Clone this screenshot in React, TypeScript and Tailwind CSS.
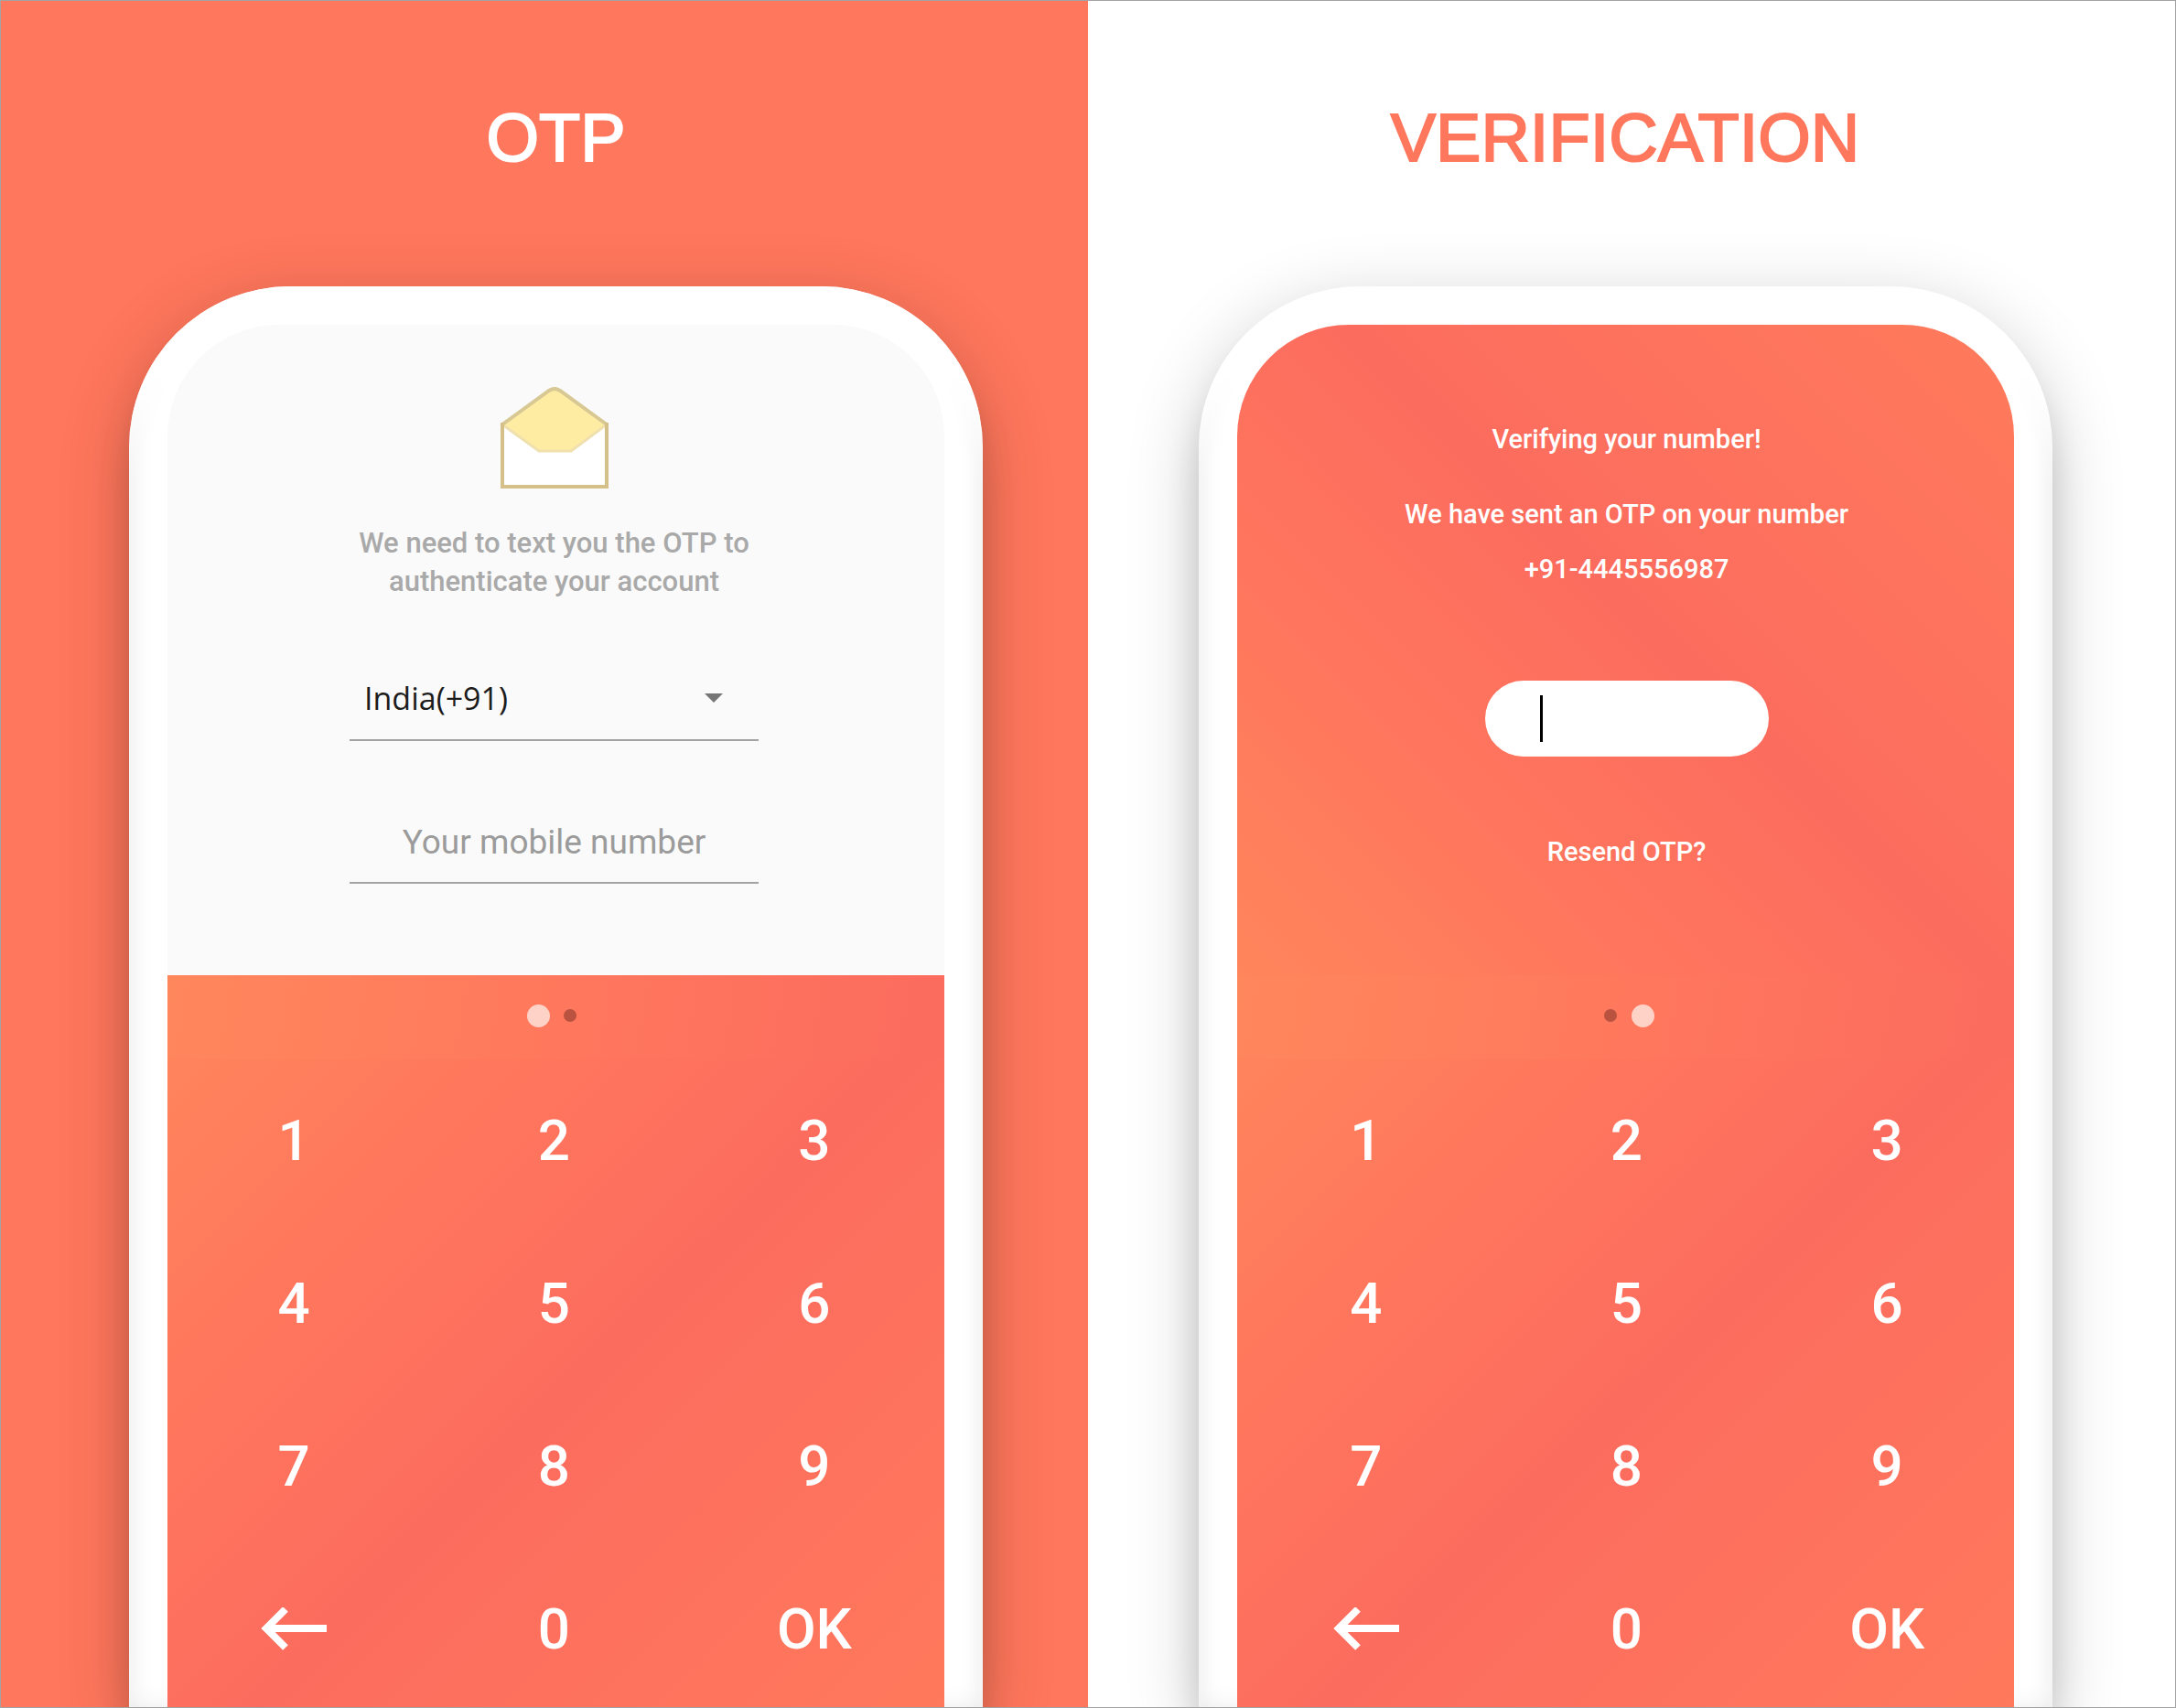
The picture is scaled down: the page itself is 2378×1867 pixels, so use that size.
import type { ReactNode } from "react";

const keys = ["1", "2", "3", "4", "5", "6", "7", "8", "9", "back", "0", "OK"];

function Envelope() {
  return (
    <svg viewBox="0 0 120 112" className="h-[112px] w-[120px]" aria-hidden="true">
      <path d="M3 41 L54 4 Q60 0 66 4 L117 41 V110 H3 Z" fill="#ffffff" />
      <path d="M3 41 L54 4 Q60 0 66 4 L117 41 L78 70 H43 Z" fill="#ffeca3" stroke="#f0e0ae" strokeWidth="3" strokeLinejoin="round" />
      <path d="M3 41 L54 4 Q60 0 66 4 L117 41" fill="none" stroke="#d8c894" strokeWidth="4" />
      <path d="M3 39 V109 H117 V39" fill="none" stroke="#d5c08a" strokeWidth="4" />
    </svg>
  );
}

function BackArrow() {
  return (
    <svg viewBox="0 0 72 48" className="h-[48px] w-[72px]" fill="none" stroke="#ffffff" strokeWidth="8" aria-hidden="true">
      <path d="M72 23H8" />
      <path d="M27 2 L6 23 L27 44" />
    </svg>
  );
}

function Dot({ active }: { active: boolean }) {
  return (
    <span className="flex w-[35px] justify-center">
      <span className={active ? "size-[25px] rounded-full bg-[#ffd2c8]" : "size-[14px] rounded-full bg-[#b9533f]"} />
    </span>
  );
}

function Keypad({ page, inset }: { page: number; inset: string }) {
  return (
    <div className="bg-[linear-gradient(135deg,#ff875c_0%,#ff775d_28%,#fc6c5e_54%,#ff795c_100%)]">
      <div className={`flex h-[92px] items-center justify-center bg-[linear-gradient(100deg,#ff875c_0%,#ff785d_50%,#fb6b5e_100%)] pb-1 ${inset}`}>
        <Dot active={page === 0} />
        <Dot active={page === 1} />
      </div>
      <div className={inset}>
        <div className="-mx-1 grid grid-cols-3">
          {keys.map((key) => (
            <button
              key={key}
              type="button"
              aria-label={key === "back" ? "Back" : undefined}
              className="flex h-[178px] items-center justify-center text-[62px] leading-none font-medium text-white"
            >
              {key === "back" ? <BackArrow /> : key}
            </button>
          ))}
        </div>
      </div>
    </div>
  );
}

function Phone({ children }: { children: ReactNode }) {
  return (
    <div className="mt-[122px] w-full max-w-[933px] rounded-t-[176px] bg-white px-[42px] pt-[42px] shadow-[0_20px_80px_rgba(0,0,0,0.2),0_40px_36px_rgba(0,0,0,0.14),inset_0_60px_24px_-12px_#ffffff,inset_0_0_28px_rgba(0,0,0,0.1)]">
      <div className="overflow-hidden rounded-t-[122px]">{children}</div>
    </div>
  );
}

const title = "text-[74px] leading-[80px] font-['Liberation_Sans',Arial,sans-serif] [-webkit-text-stroke:2px_currentColor]";

export default function App() {
  return (
    <main className="grid h-screen grid-cols-2 overflow-hidden border border-[#a3a3a3] bg-white font-[Roboto,sans-serif]">
      <section className="flex flex-col items-center overflow-hidden bg-[#ff775c] pt-[110px] pl-[25px]">
        <h1 className={`${title} text-white`}>OTP</h1>
        <Phone>
          <form className="flex flex-col items-center bg-[#fafafa] pt-[68px] pr-1 pb-[100px]">
            <Envelope />
            <p className="mt-[38px] w-[447px] text-center text-[31px] leading-[42px] font-medium text-[#a9a9a9]">
              We need to text you the OTP to authenticate your account
            </p>
            <div className="relative mt-[57px] w-[447px]">
              <select
                aria-label="Country code"
                className="h-[96px] w-full appearance-none border-b-2 border-[#a3a3a3] bg-transparent pt-1 pl-4 font-['Open_Sans',sans-serif] text-[34px] text-[#1c1c1c] outline-none"
              >
                <option>India(+91)</option>
              </select>
              <svg viewBox="0 0 20 10" className="pointer-events-none absolute top-[44px] right-[39px] h-[10px] w-[20px]" aria-hidden="true">
                <path d="M0 0H20L10 10Z" fill="#757575" />
              </svg>
            </div>
            <input
              type="tel"
              aria-label="Your mobile number"
              placeholder="Your mobile number"
              className="mt-[66px] h-[90px] w-[447px] border-b-2 border-[#a3a3a3] bg-transparent text-center text-[37px] text-[#1c1c1c] outline-none placeholder:text-[#9b9b9b]"
            />
          </form>
          <Keypad page={0} inset="pr-1" />
        </Phone>
      </section>

      <section className="flex flex-col items-center overflow-hidden bg-white pt-[110px] pr-[14px]">
        <h1 className={`${title} text-[#ff775c]`}>VERIFICATION</h1>
        <Phone>
          <form className="flex flex-col items-center bg-[linear-gradient(225deg,#ff7b5c_0%,#fc6c5e_47%,#ff785d_76%,#ff855b_100%)] pt-[104px] pb-[114px] pl-[3px] text-center text-[29px] leading-[42px] font-medium text-white">
            <p>Verifying your number!</p>
            <p className="mt-10">We have sent an OTP on your number</p>
            <p className="mt-[18px]">+91-4445556987</p>
            <div className="relative mt-[101px] h-[83px] w-[310px]">
              <input
                type="text"
                inputMode="numeric"
                aria-label="OTP"
                className="size-full rounded-full bg-white px-[60px] text-[#1c1c1c] outline-none"
              />
              <span className="pointer-events-none absolute inset-y-4 left-[60px] w-[3px] bg-black" />
            </div>
            <button type="button" className="mt-[83px]">
              Resend OTP?
            </button>
          </form>
          <Keypad page={1} inset="pl-[3px]" />
        </Phone>
      </section>
    </main>
  );
}
